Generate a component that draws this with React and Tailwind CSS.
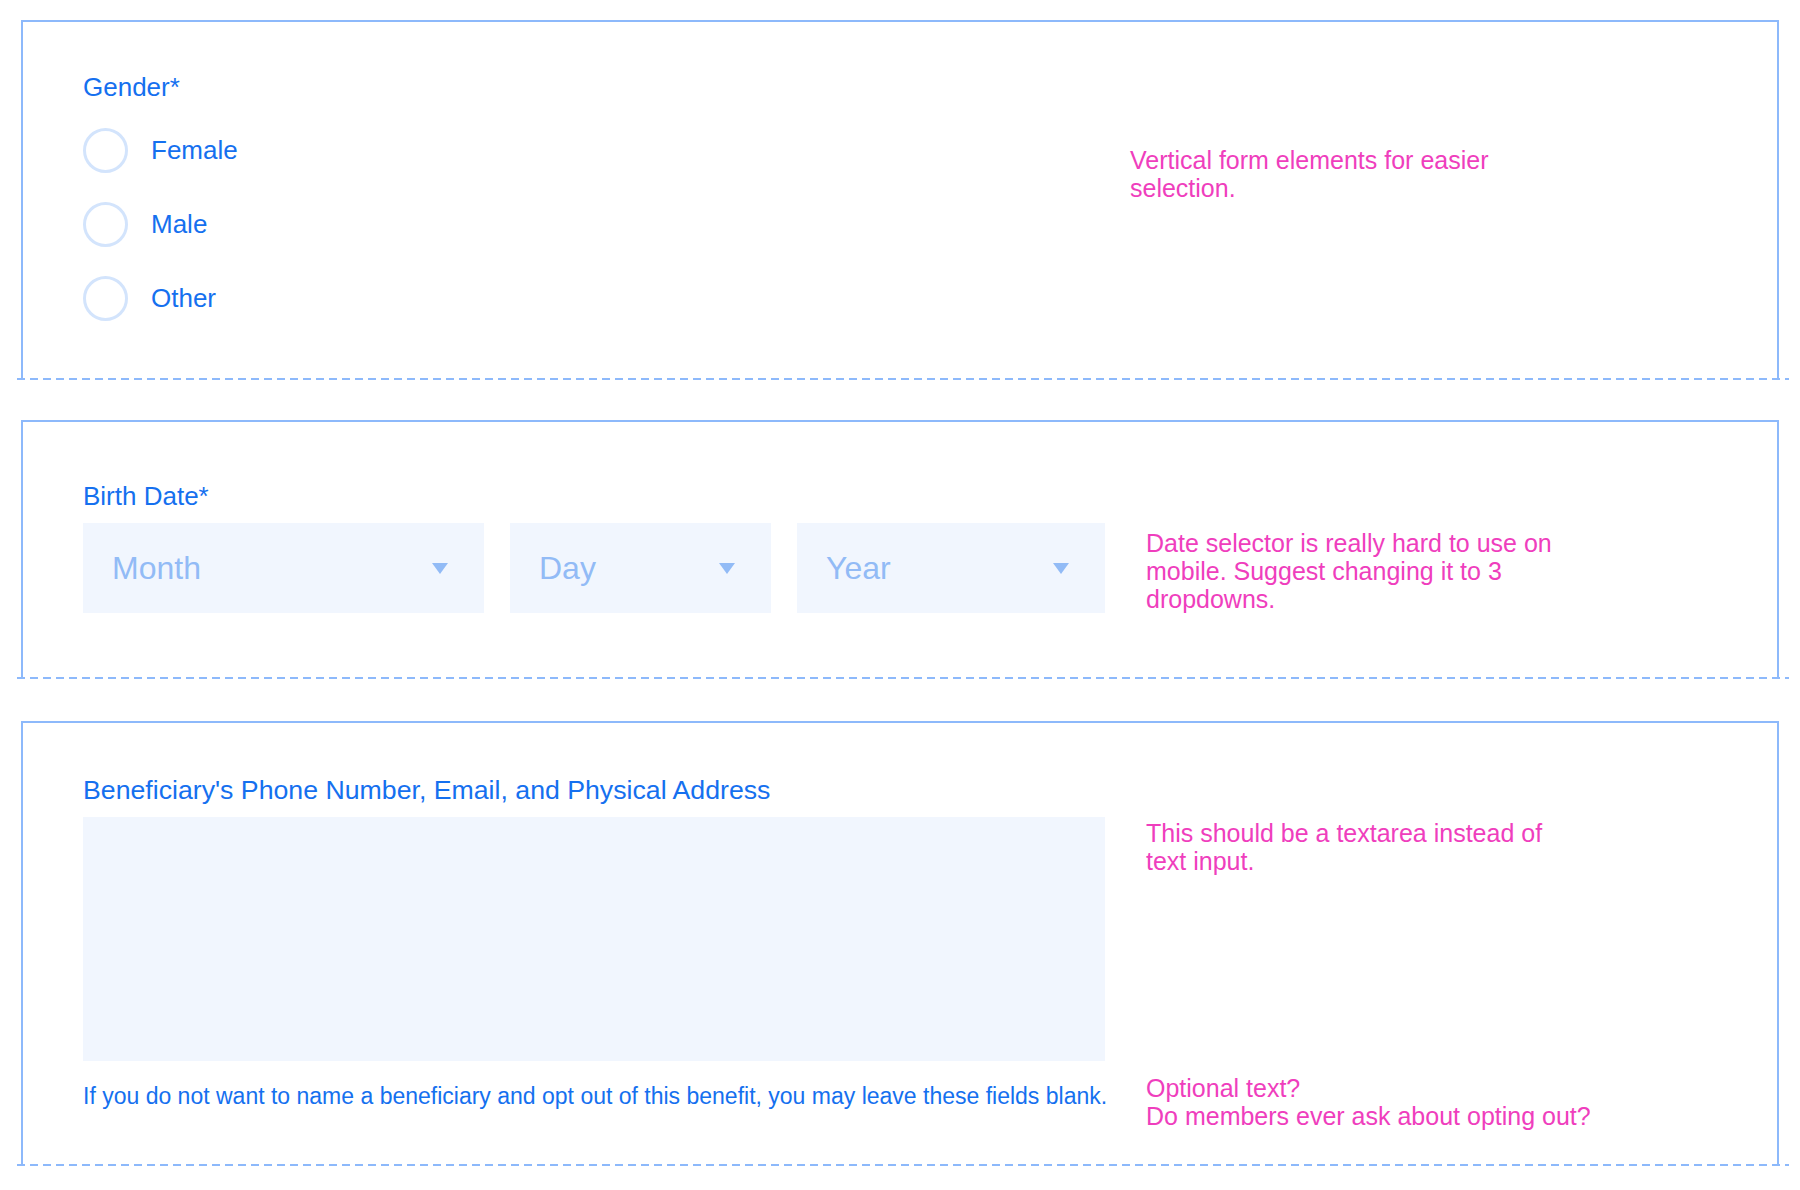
import React from 'react';

const font = "font-['Liberation_Sans',Arial,Helvetica,sans-serif]";

// dashed divider that closes each section
const Dashed = () => (
  <div className="h-[2px] w-full bg-[repeating-linear-gradient(to_right,#8db9fb_0px,#8db9fb_8px,transparent_8px,transparent_13px)]" />
);

const Note = ({ children, className = '' }) => (
  <p className={`text-[25px] leading-[28px] text-[#ef3ebd] ${className}`}>{children}</p>
);

const Label = ({ children, size = 'text-[26px]' }) => (
  <p className={`${size} leading-[30px] text-[#1570ef]`}>{children}</p>
);

const Radio = ({ label }) => (
  <label className="flex items-center h-[44px] gap-[23px] cursor-pointer">
    <span className="w-[45px] h-[45px] rounded-full border-[3px] border-[#d3e4fc] bg-white shrink-0" />
    <span className="text-[26px] leading-[30px] text-[#1570ef]">{label}</span>
  </label>
);

const Select = ({ placeholder, width }) => (
  <div className={`${width} h-[90px] bg-[#f1f6fe] flex items-center justify-between pl-[29px] pr-[36px]`}>
    <span className="text-[32px] text-[#92bbf6]">{placeholder}</span>
    <svg width="16" height="11" viewBox="0 0 16 11">
      <path d="M0 0h16L8 11z" fill="#92bbf6" />
    </svg>
  </div>
);

const Section = ({ children, className = '' }) => (
  <div className={className}>
    <div className="ml-[4px] mr-[10px] border-2 border-b-0 border-[#8db9fb] pl-[60px]">
      {children}
    </div>
    <Dashed />
  </div>
);

export default function App() {
  return (
    <div className={`${font} min-h-[1190px] w-[1800px] bg-white pt-[20px] pl-[17px] pr-[11px]`}>
      {/* Gender */}
      <Section>
        <div className="flex">
          <div className="w-[1022px] shrink-0 pt-[50px] pb-[58px]">
            <Label>Gender*</Label>
            <div className="mt-[26px] flex flex-col gap-[30px]">
              <Radio label="Female" />
              <Radio label="Male" />
              <Radio label="Other" />
            </div>
          </div>
          <Note className="ml-[25px] pt-[124px]">
            Vertical form elements for easier
            <br />
            selection.
          </Note>
        </div>
      </Section>

      {/* Birth date */}
      <Section className="mt-[40px]">
        <div className="pt-[59px] pb-[64px]">
          <Label>Birth Date*</Label>
          <div className="mt-[12px] flex">
            <div className="w-[1022px] shrink-0 flex gap-[26px]">
              <Select placeholder="Month" width="w-[401px]" />
              <Select placeholder="Day" width="w-[261px]" />
              <Select placeholder="Year" width="w-[308px]" />
            </div>
            <Note className="ml-[41px] pt-[6px]">
              Date selector is really hard to use on
              <br />
              mobile. Suggest changing it to 3
              <br />
              dropdowns.
            </Note>
          </div>
        </div>
      </Section>

      {/* Beneficiary */}
      <Section className="mt-[42px]">
        <div className="pt-[52px] pb-[34px]">
          <Label size="text-[26.7px]">Beneficiary's Phone Number, Email, and Physical Address</Label>
          <div className="mt-[12px] flex">
            <div className="w-[1022px] h-[244px] shrink-0 bg-[#f1f6fe]" />
            <Note className="ml-[41px] pt-[2px]">
              This should be a textarea instead of
              <br />
              text input.
            </Note>
          </div>
          <div className="mt-[13px] flex">
            <p className="w-[1022px] shrink-0 pt-[9px] text-[23px] leading-[26px] text-[#1570ef] whitespace-nowrap">
              If you do not want to name a beneficiary and opt out of this benefit, you may leave these fields blank.
            </p>
            <Note className="ml-[41px]">
              Optional text?
              <br />
              Do members ever ask about opting out?
            </Note>
          </div>
        </div>
      </Section>
    </div>
  );
}
